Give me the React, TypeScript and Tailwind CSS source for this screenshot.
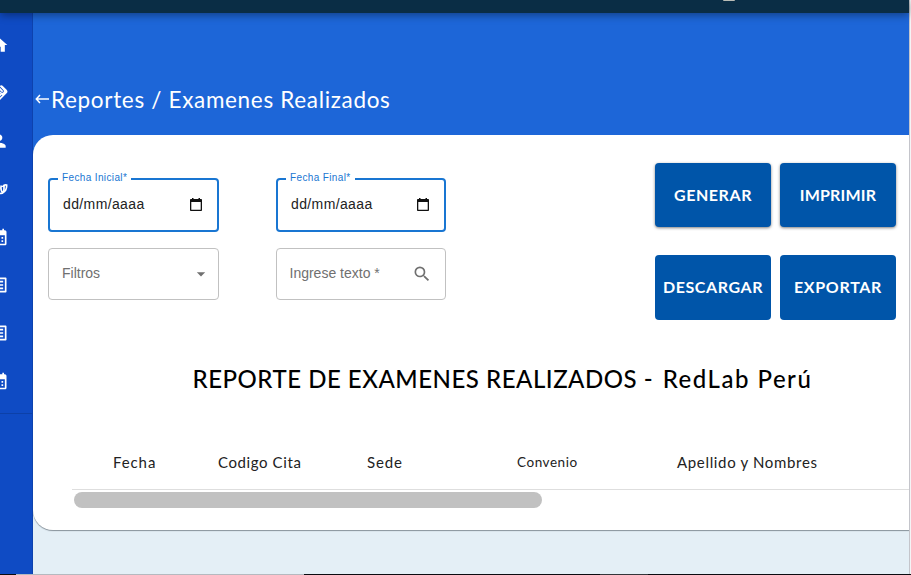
import React from "react";
import { MdHome, MdPerson, MdCalendarMonth, MdListAlt, MdSearch, MdArrowDropDown, MdHandshake } from "react-icons/md";

function MaskIcon() {
  return (
    <svg viewBox="0 0 20 20" className="h-5 w-5" fill="none" stroke="currentColor" strokeWidth="1.700">
      <path d="M10 6c-2 0-3 2-2.500 5 .5 2 2.500 3.500 4.500 3.500s3-2 3-4.500V6" />
      <path d="M12.500 6.500c-1 2-.8 4 .5 6.500 3 .5 5-3 4.600-7-2-.6-3.400.4-4 2" />
    </svg>
  );
}

function NavItem({ children }: { children: React.ReactNode }) {
  return <div className="-ml-[11px] flex h-12 w-5 items-center text-white">{children}</div>;
}

function Sidebar() {
  return (
    <nav className="w-[33px] shrink-0 overflow-hidden border-r border-[#0d42ae] bg-[#0f4bc4]">
      <div className="h-[401px] border-b border-[#0c40a8] pt-2">
        <NavItem><MdHome size={20} /></NavItem>
        <NavItem><MdHandshake size={20} /></NavItem>
        <NavItem><MdPerson size={20} /></NavItem>
        <NavItem><MaskIcon /></NavItem>
        <NavItem><MdCalendarMonth size={20} /></NavItem>
        <NavItem><MdListAlt size={20} /></NavItem>
        <NavItem><MdListAlt size={20} /></NavItem>
        <NavItem><MdCalendarMonth size={20} /></NavItem>
      </div>
    </nav>
  );
}

function CalendarGlyph() {
  return (
    <svg viewBox="0 0 12 13" className="h-[13px] w-3" fill="#111">
      <path d="M2 0h1.500v1h5V0H10v1h1.200c.4 0 .8.400.8.800v10.400c0 .4-.4.800-.8.800H.8c-.4 0-.8-.4-.8-.8V1.800C0 1.400.4 1 .8 1H2zM1.300 4v7.700h9.400V4z" />
    </svg>
  );
}

function DateField({ label, width }: { label: string; width: string }) {
  return (
    <div className={"relative flex h-[54px] items-center justify-between rounded border-2 border-[#1976d2] pb-px pl-[13px] pr-[15px] " + width}>
      <span className="absolute -top-[10px] left-[8px] whitespace-nowrap bg-white px-1 text-[10px] leading-4 tracking-[0.37px] text-[#1976d2]">{label}</span>
      <span className="text-[14px] tracking-[0.38px] text-[#222]">dd/mm/aaaa</span>
      <CalendarGlyph />
    </div>
  );
}

function ActionButton({ children, className }: { children: string; className: string }) {
  return (
    <button className={"flex w-[116px] items-center justify-center whitespace-nowrap rounded bg-[#0055a9] font-[Lato] text-[16px] font-bold text-white " + className}>
      {children}
    </button>
  );
}

function Heading({ children, className }: { children: string; className: string }) {
  return <div className={"shrink-0 whitespace-nowrap " + className}>{children}</div>;
}

export default function App() {
  return (
    <div className="flex h-[575px] w-[911px] flex-col overflow-hidden bg-[#f4f4f6] font-['Liberation_Sans',Arial,sans-serif]">
      <div className="flex min-h-0 flex-1">
        <div className="flex w-[909px] shrink-0 flex-col">
          <header className="relative z-10 flex h-[13px] shrink-0 justify-center bg-[#0a2d45] shadow-[0_2px_8px_rgba(0,0,0,0.4)]">
            <div className="ml-[549px] h-px w-3 rounded-b bg-[#b9bcb6]" />
          </header>
          <div className="flex min-h-0 flex-1">
            <Sidebar />
            <main className="min-w-0 flex-1 overflow-hidden bg-[linear-gradient(#1d66d8_0,#1d66d8_300px,#e4eff6_300px)]">
              <div className="flex h-[122px] items-start pl-[2px] pt-[71px] font-[Lato] text-white">
                <svg viewBox="0 0 14 12" className="mt-[9px] h-3 w-[15px] shrink-0" fill="none" stroke="currentColor" strokeWidth="1.500">
                  <path d="M4.500 2L.8 6l3.700 4M.8 6H13.500" />
                </svg>
                <h1 className="mt-px whitespace-nowrap pl-px text-[22.5px] leading-[30px] tracking-[0.67px]">Reportes / Examenes Realizados</h1>
              </div>
              <section className="h-[395px] w-[896px] rounded-[20px] bg-white shadow-[0_1px_1px_#87929b]">
                <div className="flex h-[193px] pl-[15px] pt-7">
                  <div className="flex w-[228px] flex-col gap-4 pt-[15px]">
                    <DateField label="Fecha Inicial*" width="w-[171px]" />
                    <div className="flex h-[52px] w-[171px] items-center justify-between rounded border border-[#c1c1c1] pl-[13px] pr-[7px] text-[14px] text-[#707070]">
                      <span className="-mt-0.5">Filtros</span>
                      <MdArrowDropDown size={20} />
                    </div>
                  </div>
                  <div className="flex w-[379px] flex-col gap-4 pt-[15px]">
                    <DateField label="Fecha Final*" width="w-[170px]" />
                    <div className="flex h-[52px] w-[170px] items-center justify-between rounded border border-[#c1c1c1] pl-[12.5px] pr-[13px] text-[14px] text-[#707070]">
                      <span className="-mt-0.5">Ingrese texto *</span>
                      <MdSearch size={20} />
                    </div>
                  </div>
                  <div className="grid h-[157px] grid-cols-[116px_116px] grid-rows-[64px_65px] gap-x-[9px] gap-y-7">
                    <ActionButton className="tracking-[0.58px] shadow-[0_1px_3px_rgba(0,0,0,0.5)]">GENERAR</ActionButton>
                    <ActionButton className="tracking-[0.2px] shadow-[0_1px_3px_rgba(0,0,0,0.5)]">IMPRIMIR</ActionButton>
                    <ActionButton className="pb-[2px] tracking-[0.58px]">DESCARGAR</ActionButton>
                    <ActionButton className="pb-[2px] tracking-[0.7px]">EXPORTAR</ActionButton>
                  </div>
                </div>
                <h2 className="mt-[33px] whitespace-nowrap pl-[159.5px] font-[Lato] text-[24px] font-medium leading-9 tracking-[0.52px] text-black">
                  REPORTE DE EXAMENES REALIZADOS - <span className="pl-[3px] tracking-[1.5px]">RedLab Perú</span>
                </h2>
                <div className="ml-[39px] mt-[39px] flex h-[54px] w-[850px] items-center border-b border-[#dedede] pl-[41px] font-[Lato] text-[15px] text-[#222]">
                  <Heading className="w-[105px] tracking-[0.9px]">Fecha</Heading>
                  <Heading className="w-[149px] tracking-[0.6px]">Codigo Cita</Heading>
                  <Heading className="w-[150px] tracking-[0.9px]">Sede</Heading>
                  <Heading className="w-[160px] text-[13.5px] tracking-[0.55px]">Convenio</Heading>
                  <Heading className="w-[170px] tracking-[0.66px]">Apellido y Nombres</Heading>
                </div>
                <div className="ml-[41px] mt-[2px] h-4 w-[468px] rounded-full bg-[#c1c1c1]" />
              </section>
            </main>
          </div>
        </div>
        <div className="w-px bg-[#c4c5cb]" />
      </div>
      <div className="flex h-px shrink-0 bg-[#0b0b10]">
        <div className="ml-4 h-px w-72 bg-[#b5b9bf]" />
        <div className="ml-[296px] h-px w-12 bg-[#34363a]" />
      </div>
    </div>
  );
}
